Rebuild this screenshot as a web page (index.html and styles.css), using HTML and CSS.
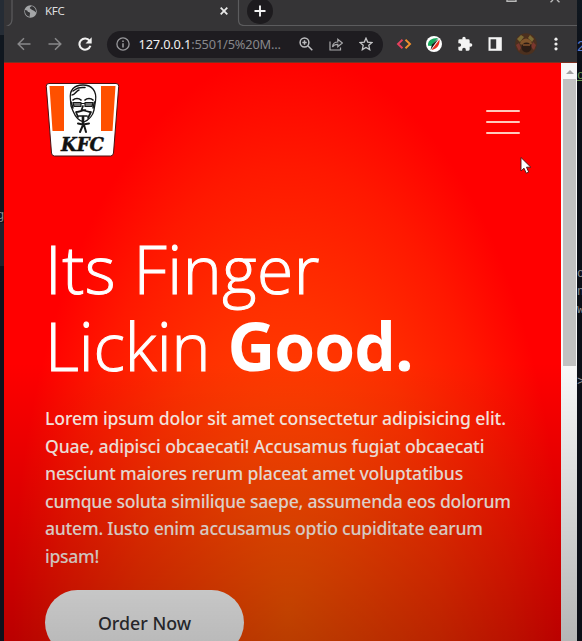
FILE: index.html
```html
<!DOCTYPE html>
<html lang="en">
<head>
<meta charset="utf-8">
<title>KFC</title>
<link rel="stylesheet" href="styles.css">
</head>
<body>
<div class="desktop">
  <div class="edge edge-left"><span class="frag f-g">g</span></div>
  <div class="window">
    <div class="tabstrip">
      <svg class="strip-lines" width="573" height="26" viewBox="0 0 573 26" fill="none" stroke="#5c5c5e" stroke-width="1.2"><path d="M8 0v19q0 6-6 7.500M234.500 0v20q0 5.500 5.500 5.500h333"/></svg>
      <div class="tab">
        <svg class="globe" width="13" height="13" viewBox="0 0 14 14"><circle cx="7" cy="7" r="6.700" fill="#a4a5a7"/><path d="M1 5.500c2 .2 3 .8 3.200 2 1.500 0 2.800.5 2.300 2-.5 1-.5 2-.2 3.200C3 12.500.800 9.500 1 5.500zM8.500 1c-1 1-2.500 1-2.200 2.500.8 1 2 .5 2 2 1.500-.5 2 .8 3.200 1.200L13 8c.2-3-1.500-6.200-4.500-7z" fill="#343436"/></svg>
        <span class="tab-title">KFC</span>
        <svg class="tab-close" width="8" height="8" viewBox="0 0 8 8" stroke="#e8e8e8" stroke-width="1.800"><path d="M.7.7l6.600 6.600M7.300.7L.7 7.300"/></svg>
      </div>
      <div class="new-tab"><svg width="12" height="12" viewBox="0 0 12 12" stroke="#f2f2f2" stroke-width="1.900"><path d="M6 .5v11M.5 6h11"/></svg></div>
      <svg class="winctl" width="54" height="3" viewBox="0 0 54 3" fill="none" stroke="#b9b9b9" stroke-width="1.400"><path d="M1 0v1.200h9V0M44.500 2.200L47 0M51 0l2.500 2.200"/></svg>
    </div>
    <div class="toolbar">
      <svg class="nav" width="14" height="14" viewBox="0 0 14 14" fill="none" stroke="#88888a" stroke-width="1.500"><path d="M13.500 7H1.500M7 1.200L1.200 7 7 12.800"/></svg>
      <svg class="nav" width="14" height="14" viewBox="0 0 14 14" fill="none" stroke="#88888a" stroke-width="1.500"><path d="M.5 7h12M7 1.200L12.800 7 7 12.800"/></svg>
      <svg class="nav" width="14" height="14" viewBox="0 0 14 14"><path d="M11.600 3.800A5.600 5.600 0 1 0 12.400 8.800" fill="none" stroke="#f1f1f1" stroke-width="2.100"/><path d="M13.700.3v6.200H7.500z" fill="#f1f1f1"/></svg>
      <div class="omnibox">
        <svg width="14" height="14" viewBox="0 0 14 14" fill="none" stroke="#97979a" stroke-width="1.300"><circle cx="7" cy="7" r="6.100"/><path d="M7 6.200v4.200M7 3.400v1.500" stroke-width="1.600"/></svg>
        <span class="url"><b>127.0.0.1</b>:5501/5%20M...</span>
        <svg class="ob" width="14" height="14" viewBox="0 0 14 14" fill="none" stroke="#bdbdbf" stroke-width="1.500"><circle cx="5.500" cy="5.500" r="4.400"/><path d="M8.800 8.800l4.500 4.500M3.300 5.500h4.400M5.500 3.300v4.400"/></svg>
        <svg class="ob" width="14" height="14" viewBox="0 0 14 14" fill="none" stroke="#aaaaac" stroke-width="1.200"><path d="M1 4.500V13h10.500v-2.500M3.500 10c.3-3.500 2.300-5 5.300-5V2.200L13.400 6 8.800 9.800V7.300C6.500 7.200 4.700 8 3.500 10z"/></svg>
        <svg class="ob" width="14" height="14" viewBox="0 0 14 14" fill="none" stroke="#c5c5c7" stroke-width="1.300"><path d="M7 1.200l1.700 3.900 4.300.4-3.200 2.800.9 4.300L7 10.400l-3.700 2.200.9-4.300L1 5.500l4.300-.4z"/></svg>
      </div>
      <div class="ext">
        <svg width="16" height="16" viewBox="0 0 16 16" fill="none" stroke-width="1.900"><path d="M6.500 3.800L2 8l4.500 4.200" stroke="#e8405e"/><path d="M9.500 3.800L14 8l-4.500 4.200" stroke="#f0912c"/></svg>
        <svg width="16" height="16" viewBox="0 0 16 16"><circle cx="8" cy="8" r="8" fill="#fff"/><path d="M2 9.800C1.500 5 5 2 12 2L5.500 10z" fill="#17a85c"/><path d="M13 2.300l-7 6.200-1.500 5.500z" fill="#151515"/><path d="M13.500 3.500C14 9 11 13 5.300 14z" fill="#e82e20"/></svg>
        <svg width="16" height="16" viewBox="0 0 24 24" fill="#f4f4f4"><path d="M20.500 11H19V7a2 2 0 0 0-2-2h-4V3.500a2.500 2.500 0 0 0-5 0V5H4a2 2 0 0 0-2 2v3.800h1.500a2.700 2.700 0 0 1 0 5.400H2V20a2 2 0 0 0 2 2h3.800v-1.500a2.700 2.700 0 0 1 5.400 0V22H17a2 2 0 0 0 2-2v-4h1.500a2.500 2.500 0 0 0 0-5z"/></svg>
        <svg width="16" height="16" viewBox="0 0 16 16"><path d="M1.500 1.200h13.300v13.600H1.500z" fill="#f4f4f4"/><path d="M3.600 3.300h5.600v9.400H3.600z" fill="#343436"/></svg>
        <svg class="avatar" width="22" height="22" viewBox="0 0 22 22"><circle cx="11" cy="11" r="10.800" fill="#4c301e"/><path d="M2 6l4-4 3 2-4 5zM15 2l4 4-2 3-4-4z" fill="#7d6a34"/><path d="M1 12l3-2 2 5-2 3zM18 9l3 3-2 5-3-3z" fill="#7a372e"/><path d="M6 8q5-5 10 0l1 3-3 1H8l-3-1z" fill="#80542a"/><circle cx="11.500" cy="14.500" r="5" fill="#2c1c14"/><path d="M8 11h7v2H8z" fill="#6d4325"/></svg>
        <svg width="16" height="16" viewBox="0 0 16 16" fill="#eee"><circle cx="8" cy="3.200" r="1.600"/><circle cx="8" cy="8" r="1.600"/><circle cx="8" cy="12.800" r="1.600"/></svg>
      </div>
    </div>
    <div class="viewport">
      <main class="page">
        <header class="site-header">
          <svg class="logo" width="75" height="75" viewBox="0 0 75 75">
            <path d="M4 1.500h67q3 0 2.700 3L68.500 71q-.3 3-3 3h-56q-2.700 0-3-3L1.300 4.500Q1 1.500 4 1.500z" fill="#fff" stroke="#481010" stroke-width="1"/>
            <path d="M4.500 4H19v45H7.500zM56 4h14.500L67.500 49H56z" fill="#ff5000"/>
            <g fill="none" stroke="#161616" stroke-linecap="round" stroke-linejoin="round">
              <path d="M25.500 18C24 8 29 3 38 3s14 6 12.500 16l-1.500 9c-1 5-5 10-10 12-6-1-9-6-11-11l-2-5z" stroke-width="1.300"/>
              <path d="M27 13c3 0 4-4 7-5M28 9c4-3 6-4 12-3.500M26 20l2 6M49.500 20l-1.500 6" stroke-width="1.500"/>
              <path d="M28 18c2-2 6-2 8 0M40 18c2-2 6-2 8 0" stroke-width="1.700"/>
              <path d="M28 20.500h8v4h-7zM40 20.500h8l-1 4h-7zM36 21.500h4" fill="#777" stroke-width="1.200"/>
              <path d="M38 24l-1.500 4h4M31 30c4 0 5-1.500 7.500-1.500S43 30 46 30M34 34h8M31 30l2 5M46 30l-3 6" stroke-width="1.700"/>
              <path d="M38 35v6" stroke-width="2.600"/>
              <path d="M33 41.500l5 1 6-1M38 43l-3 7M39 43l2 7" stroke-width="2"/>
            </g>
            <text class="logo-word" x="37.500" y="69" text-anchor="middle" textLength="43" lengthAdjust="spacingAndGlyphs">KFC</text>
          </svg>
          <div class="burger"><i></i><i></i><i></i></div>
        </header>
        <h1 class="headline"><span class="h1a">Its Finger</span><span class="h1b">Lickin <b>Good.</b></span></h1>
        <p class="copy">
          <span class="l1">Lorem ipsum dolor sit amet consectetur adipisicing elit.</span>
          <span class="l2">Quae, adipisci obcaecati! Accusamus fugiat obcaecati</span>
          <span class="l3">nesciunt maiores rerum placeat amet voluptatibus</span>
          <span class="l4">cumque soluta similique saepe, assumenda eos dolorum</span>
          <span class="l5">autem. Iusto enim accusamus optio cupiditate earum</span>
          <span class="l6">ipsam!</span>
        </p>
        <a class="order">Order Now</a>
      </main>
      <div class="scrollbar"><span class="up"></span><span class="thumb"></span></div>
    </div>
  </div>
  <div class="edge edge-right">
    <span class="frag r1">2</span><span class="frag r2">o</span><span class="frag r3">o</span><span class="frag r4">n</span><span class="frag r5">w</span><span class="frag r6">&gt;</span>
  </div>
  <svg class="cursor" width="12" height="19" viewBox="0 0 12 18"><path d="M1 1v13.500l3-2.800 2.200 5 2.500-1.100-2.200-4.900h4.300z" fill="#fff" stroke="#4a1210" stroke-width=".9"/></svg>
</div>
</body>
</html>
```

FILE: styles.css
```css
* { box-sizing: border-box; }
body { margin: 0; background: #0d1018; overflow: hidden; }
svg { display: block; flex: none; }

.desktop {
  position: relative;
  width: 582px;
  height: 641px;
  display: grid;
  grid-template-columns: 4px 573px 5px;
  overflow: hidden;
}
.edge { position: relative; overflow: hidden; background: #0c0f15; }
.edge-left { background: linear-gradient(#252c35 0 35px, #10171f 35px 223px, #20242e 223px 266px, #10121c 266px); }
.edge-right { background: linear-gradient(#101820, #0c0f17 70px); }
.frag { position: absolute; left: 0; font: 12px/12px "Liberation Mono", monospace; color: #8d9096; }
.f-g { left: -3px; top: 210px; }
.r1 { top: 41px; color: #5b7bd0; font-size: 14px; }
.r2 { top: 70px; color: #6a9955; text-decoration: underline; }
.r3 { top: 268px; }
.r4 { top: 286px; }
.r5 { top: 304px; }
.r6 { top: 376px; }

.window { display: flex; flex-direction: column; height: 641px; background: #353436; overflow: hidden; }
.tabstrip { position: relative; display: flex; height: 26px; flex: none; font-family: "Noto Sans", sans-serif; }
.strip-lines { position: absolute; left: 0; top: 0; }
.tab { display: flex; align-items: center; width: 234px; height: 22px; padding: 0 8px 0 20px; }
.tab-title { margin-left: 8px; font-size: 11.500px; line-height: 22px; letter-spacing: -.3px; color: #dededf; }
.tab-close { margin-left: auto; margin-right: 2px; }
.new-tab { display: flex; align-items: center; justify-content: center; width: 26px; height: 26px; margin: -2px 0 0 9px; border-radius: 50%; background: #1d1b1e; }
.winctl { margin-left: 233px; }

.toolbar { display: flex; align-items: center; height: 37px; flex: none; padding: 2px 12px 2px 13px; border-bottom: 1px solid #7b3022; }
.nav { margin-right: 16.500px; }
.omnibox { display: flex; align-items: center; width: 276px; height: 27px; margin-left: -2px; padding: 0 9px; border-radius: 14px; background: #1e1c20; }
.url { width: 144px; margin-left: 9px; font: 12.800px/20px "Noto Sans", sans-serif; letter-spacing: -.17px; color: #88888b; white-space: nowrap; }
.url b { font-weight: 400; color: #f0f0f0; }
.ob { margin-left: 16.400px; }
.url + .ob { margin-left: 16px; }
.ext { display: flex; align-items: center; gap: 14.400px; margin-left: 13.500px; }
.avatar { margin: 0 -3px; }

.viewport { display: flex; flex: 1; min-height: 0; position: relative; }
.viewport::after {
  content: "";
  position: absolute;
  inset: 0;
  background: linear-gradient(transparent 300px, rgba(0, 0, 0, .27) 578px);
}
.page {
  width: 557px;
  padding: 20px 41px 0;
  overflow: hidden;
  background: radial-gradient(ellipse 275px 560px at 284px 550px, #ff5600, #ff4200 30%, #ff3000 55%, #ff1800 80%, #ff0000);
}
.site-header { display: flex; justify-content: space-between; height: 75px; }
.logo { width: 75px; margin: -1px 0 0 -.5px; }
.logo-word { font: italic bold 19px "DejaVu Serif", serif; fill: #111; stroke: #111; stroke-width: .5px; }
.burger { display: flex; flex-direction: column; justify-content: space-between; width: 34px; height: 24px; margin-top: 27px; }
.burger i { height: 2px; background: #ffc9bd; border-radius: 1px; }

.headline { margin: 72px 0 0; font: 300 66px/77px "Open Sans", sans-serif; color: #fff; }
.headline span { display: block; width: max-content; -webkit-text-stroke: 1px #fff; }
.h1a { letter-spacing: .5px; }
.h1b { letter-spacing: -.1px; }
.headline b { font-weight: 700; letter-spacing: -.9px; -webkit-text-stroke: 0; }
.copy { margin: 21px 0 0; font: 500 17.600px/27.500px "Noto Sans", sans-serif; color: #fff0e8; }
.copy span { display: block; width: max-content; white-space: nowrap; }
.l1 { letter-spacing: -.11px; }
.l2 { letter-spacing: -.14px; }
.l3 { letter-spacing: -.15px; }
.l4 { letter-spacing: -.22px; }
.l5 { letter-spacing: -.24px; }
.l6 { letter-spacing: -.3px; }
.order {
  display: flex;
  align-items: center;
  justify-content: center;
  width: 199px;
  height: 65px;
  margin-top: 20px;
  border-radius: 40px;
  background: #fff;
  font: 500 17.800px/24px "Noto Sans", sans-serif;
  color: #333338;
}

.scrollbar { display: flex; flex-direction: column; align-items: center; width: 16px; padding-left: 1px; background: #f8f8f8; }
.up { width: 0; height: 4px; margin: 7px 0 5px; border: 4px solid transparent; border-top: 0; border-bottom-color: #a2a2a2; }
.thumb { width: 13px; height: 287px; background: #c1c1c1; }

.cursor { position: absolute; left: 520px; top: 156px; }
```
